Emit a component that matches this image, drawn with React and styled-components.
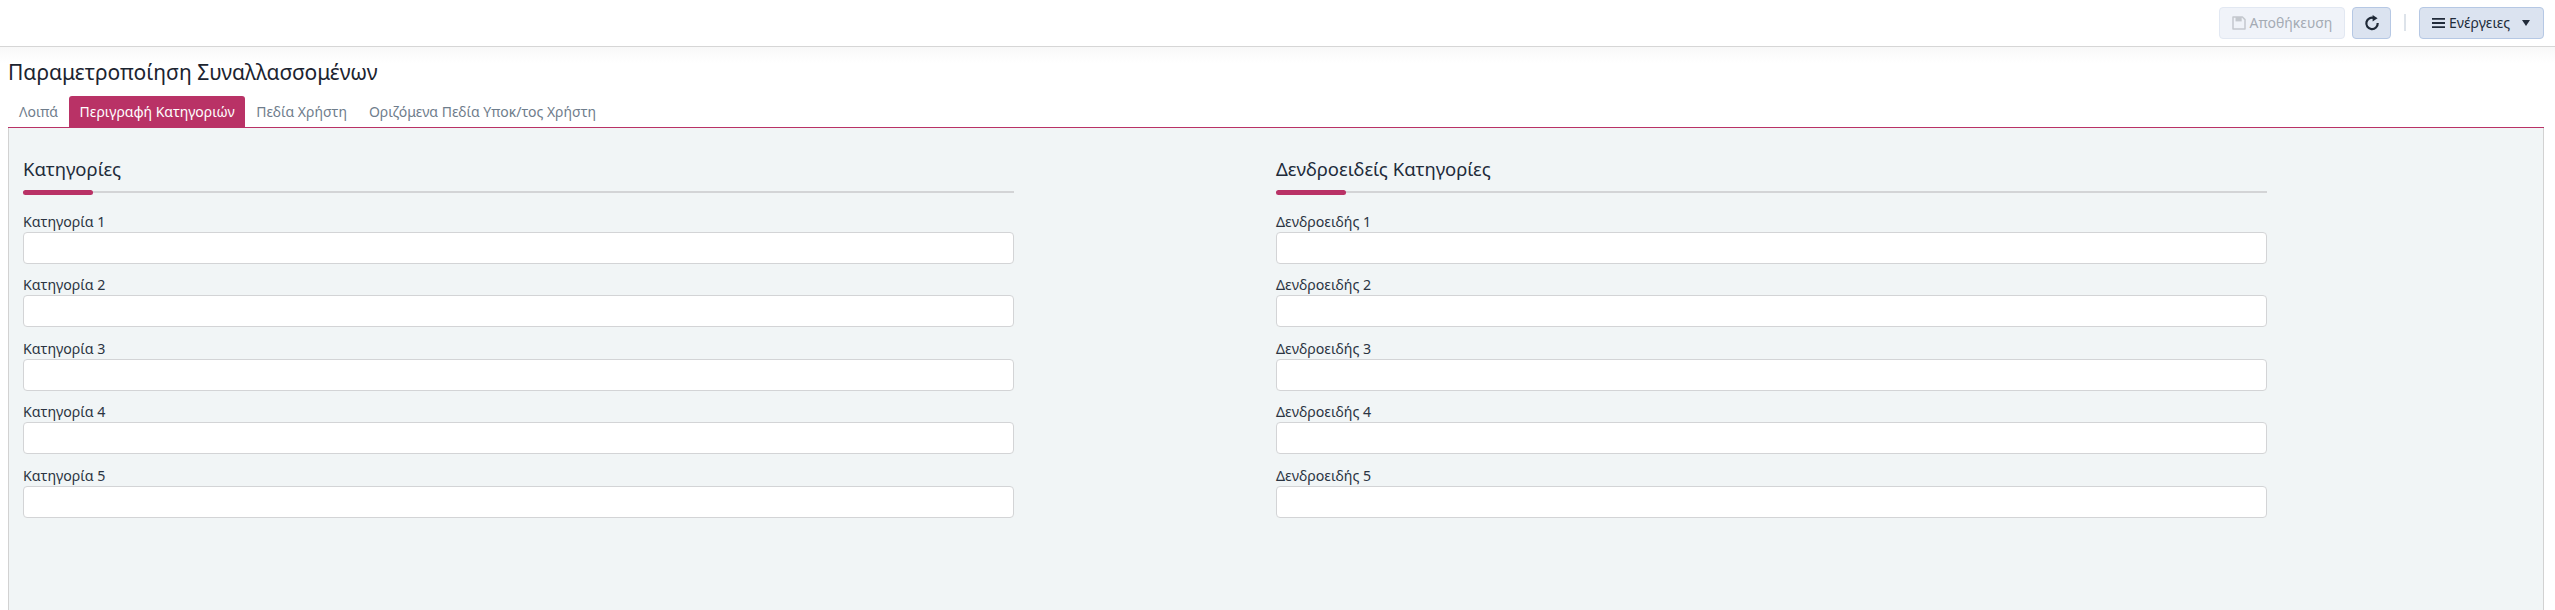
import React from 'react';
import styled, { createGlobalStyle } from 'styled-components';

const GlobalStyle = createGlobalStyle`
  html, body {
    margin: 0;
    height: 100%;
    background: #fff;
    overflow: hidden;
  }
  body {
    font-family: "Noto Sans", "Open Sans", sans-serif;
    color: #212b3a;
  }
`;

const Page = styled.div`
  display: flex;
  flex-direction: column;
  height: 610px;
`;

const Toolbar = styled.div`
  display: flex;
  justify-content: flex-end;
  align-items: center;
  height: 47px;
  box-sizing: border-box;
  padding: 0 11px 1px 0;
  border-bottom: 1px solid #d6d6d6;
  flex-shrink: 0;
`;

const ToolButton = styled.button`
  display: flex;
  align-items: center;
  justify-content: center;
  gap: 4px;
  width: ${p => p.$width}px;
  height: 32px;
  box-sizing: border-box;
  padding: 0;
  margin-left: ${p => p.$gap || 0}px;
  border-radius: 4px;
  font-family: inherit;
  font-size: 14px;
  border: 1px solid ${p => (p.disabled ? '#e2e8f2' : '#b6c8e4')};
  background: ${p => (p.disabled ? '#f0f3f9' : '#dbe3f0')};
  color: ${p => (p.disabled ? '#a5abb4' : '#212b3a')};
`;

const Separator = styled.span`
  width: 2px;
  height: 17px;
  background: #dde3ea;
  margin: 0 13px;
`;

const Caret = styled.span`
  width: 0;
  height: 0;
  margin-left: 8px;
  margin-right: 1px;
  border-left: 4px solid transparent;
  border-right: 4px solid transparent;
  border-top: 6px solid #212b3a;
`;

const Main = styled.div`
  flex: 1;
  display: flex;
  flex-direction: column;
  min-height: 0;
  background: linear-gradient(#f8f8f8, #fff 16px);
`;

const Title = styled.h1`
  margin: 0;
  padding: 11px 0 0 8px;
  height: 38px;
  box-sizing: border-box;
  font-size: 21px;
  line-height: 28px;
  font-weight: 400;
  color: #1c2430;
`;

const Tabs = styled.div`
  display: flex;
  height: 32px;
  box-sizing: border-box;
  margin: 11px 11px 0 8px;
  border-bottom: 1px solid #b93266;
  flex-shrink: 0;
`;

const Tab = styled.div`
  padding: 0 ${p => (p.$active ? 10.5 : 11)}px;
  line-height: 31px;
  font-size: 14px;
  border-radius: 3px 3px 0 0;
  background: ${p => (p.$active ? '#b93266' : 'transparent')};
  color: ${p => (p.$active ? '#fff' : '#6f7d8c')};
`;

const Panel = styled.div`
  flex: 1;
  display: grid;
  grid-template-columns: 1253px 1fr;
  align-content: start;
  margin: 0 11px 0 8px;
  padding: 27px 0 0 14px;
  background: #f1f5f6;
  border-left: 1px solid #d2d2d2;
  border-right: 1px solid #d2d2d2;
`;

const Column = styled.section`
  width: 991px;
`;

const SectionTitle = styled.h2`
  margin: 0;
  height: 36px;
  font-size: 18.5px;
  line-height: 27px;
  font-weight: 400;
  color: #212b3a;
`;

const Rule = styled.div`
  position: relative;
  height: 2px;
  background: #d3d4d6;
  margin-bottom: 18.75px;

  &::before {
    content: '';
    position: absolute;
    left: 0;
    top: -1px;
    width: 70px;
    height: 5px;
    border-radius: 3px;
    background: #b93266;
  }
`;

const Field = styled.div`
  height: 63.5px;
`;

const Label = styled.label`
  display: block;
  height: 20px;
  font-size: 14.2px;
  line-height: 19px;
  color: #2b3442;
`;

const Input = styled.input`
  display: block;
  width: 100%;
  height: 32px;
  box-sizing: border-box;
  background: #fff;
  border: 1px solid #d3d4d6;
  border-radius: 4px;
  outline: none;
`;

const SaveIcon = () => (
  <svg width="14" height="14" viewBox="0 0 14 14" fill="none">
    <path d="M1 1h9.4L13 3.6V13H1z" stroke="#c4c8ce" strokeWidth="1.5" strokeLinejoin="round" />
    <path d="M3.5 1h6.2v4.4H3.5z" fill="#c4c8ce" />
  </svg>
);

const RefreshIcon = () => (
  <svg width="16" height="16" viewBox="0 0 16 16" fill="none">
    <path d="M10.4 3.2A5.7 5.7 0 1 0 13.7 8" stroke="#1f2937" strokeWidth="2.2" />
    <path d="M8.6 0v6.4l5-3.2z" fill="#1f2937" />
  </svg>
);

const MenuIcon = () => (
  <svg width="13" height="12" viewBox="0 0 13 12">
    <path d="M0 1h13v1.8H0zM0 5.1h13v1.8H0zM0 9.2h13V11H0z" fill="#212b3a" />
  </svg>
);

const categories = [1, 2, 3, 4, 5];

const FieldGroup = ({ title, prefix }) => (
  <Column>
    <SectionTitle>{title}</SectionTitle>
    <Rule />
    {categories.map(n => (
      <Field key={n}>
        <Label>{prefix} {n}</Label>
        <Input type="text" />
      </Field>
    ))}
  </Column>
);

const App = () => (
  <Page>
    <GlobalStyle />
    <Toolbar>
      <ToolButton disabled $width={126}>
        <SaveIcon />
        Αποθήκευση
      </ToolButton>
      <ToolButton $gap={7} $width={39}>
        <RefreshIcon />
      </ToolButton>
      <Separator />
      <ToolButton $width={125}>
        <MenuIcon />
        Ενέργειες
        <Caret />
      </ToolButton>
    </Toolbar>
    <Main>
      <Title>Παραμετροποίηση Συναλλασσομένων</Title>
      <Tabs>
        <Tab>Λοιπά</Tab>
        <Tab $active>Περιγραφή Κατηγοριών</Tab>
        <Tab>Πεδία Χρήστη</Tab>
        <Tab>Οριζόμενα Πεδία Υποκ/τος Χρήστη</Tab>
      </Tabs>
      <Panel>
        <FieldGroup title="Κατηγορίες" prefix="Κατηγορία" />
        <FieldGroup title="Δενδροειδείς Κατηγορίες" prefix="Δενδροειδής" />
      </Panel>
    </Main>
  </Page>
);

export default App;
